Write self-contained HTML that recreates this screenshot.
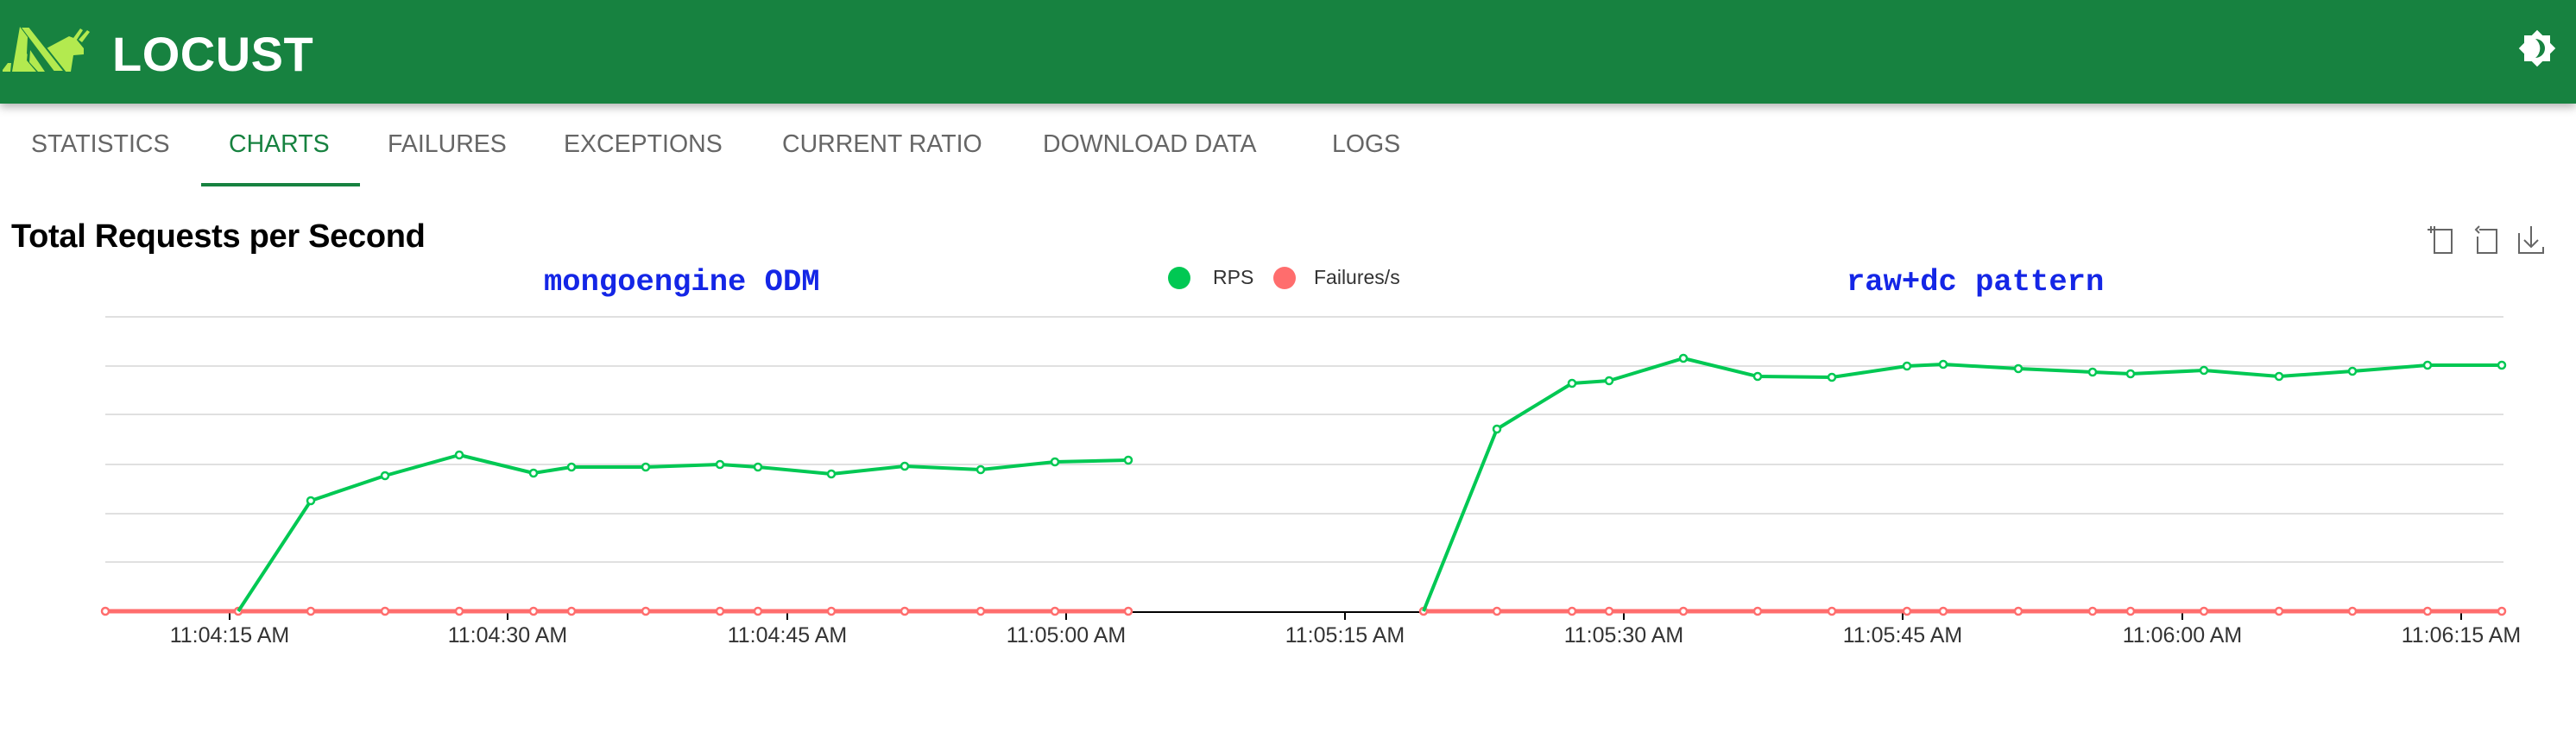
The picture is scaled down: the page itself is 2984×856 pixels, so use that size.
<!DOCTYPE html>
<html><head><meta charset="utf-8"><style>
html,body{margin:0;padding:0;width:2984px;height:856px;background:#fff;overflow:hidden;font-family:"Liberation Sans",Arial,sans-serif}
.hdr{position:absolute;left:0;top:0;width:2984px;height:120px;background:#178240;box-shadow:0 4px 10px rgba(0,0,0,.3)}
.logo{position:absolute;left:130px;top:30px;font-size:56px;font-weight:bold;color:#fff;letter-spacing:0.5px}
.tab{position:absolute;top:151px;font-size:28.5px;color:#666;white-space:nowrap}
.ul{position:absolute;left:233px;top:212px;width:184px;height:4px;background:#178240}
.title{position:absolute;left:13px;top:253px;font-size:38px;font-weight:bold;color:#000;letter-spacing:-0.3px}
.ann{position:absolute;top:306px;font-family:"Liberation Mono",monospace;font-weight:bold;font-size:35.5px;color:#1426e6}
.leg{position:absolute;top:308px;font-size:23px;color:#333}
</style></head><body>
<div class="hdr">
<svg style="position:absolute;left:0;top:0" width="110" height="100" viewBox="0 0 110 100" fill="#b3ea4f">
<polygon points="50,58 80,42 88,45 97,56 97,63 85,64 82,83 72,83 58,68"/>
<polygon points="85,44 93,33 96,35 89,46"/>
<polygon points="91,46 101,35 104,37 95,49"/>
<polygon points="23,31 34,31 75,83 62,83" stroke="#178240" stroke-width="2"/>
<polygon points="23,31 32,43 31,62 48,83 14,83"/>
<polygon points="3,81 9,73 13,73 12,83 3,83"/>
<polygon points="33,50 31,70 42,83 58,83" fill="#178240"/>
<polygon points="35,58 34,72 44,83 52,83" fill="#b3ea4f"/>
</svg>
<div class="logo">LOCUST</div>
<svg style="position:absolute;left:2916px;top:33px" width="46" height="46" viewBox="0 0 46 46">
<rect x="8" y="8" width="30" height="30" fill="#fff"/>
<rect x="8" y="8" width="30" height="30" fill="#fff" transform="rotate(45 23 23)"/>
<path d="M21 12 A11 11 0 1 1 21 34 A14 14 0 0 0 21 12Z" fill="#178240"/>
</svg>
</div>
<div class="tab" style="left:36px">STATISTICS</div>
<div class="tab" style="left:265px;color:#178240">CHARTS</div>
<div class="tab" style="left:449px">FAILURES</div>
<div class="tab" style="left:653px">EXCEPTIONS</div>
<div class="tab" style="left:906px">CURRENT RATIO</div>
<div class="tab" style="left:1208px">DOWNLOAD DATA</div>
<div class="tab" style="left:1543px">LOGS</div>
<div class="ul"></div>
<div class="title">Total Requests per Second</div>
<div class="ann" style="left:630px">mongoengine ODM</div>
<div class="ann" style="left:2139px">raw+dc pattern</div>
<svg style="position:absolute;left:1352px;top:308px" width="28" height="28"><circle cx="14" cy="14" r="13" fill="#00c853"/></svg>
<div class="leg" style="left:1405px">RPS</div>
<svg style="position:absolute;left:1474px;top:308px" width="28" height="28"><circle cx="14" cy="14" r="13" fill="#ff6d6d"/></svg>
<div class="leg" style="left:1522px">Failures/s</div>
<svg style="position:absolute;left:2810px;top:260px" width="140" height="36" viewBox="0 0 140 36" fill="none" stroke="#666" stroke-width="2">
<path d="M2 6H30V33H10V2"/><path d="M10 6H2M6 2V10" />
<path d="M62 6H82V33H60V14M62 2L58 6L62 10"/>
<path d="M108 10V33H136V26M108 26V33M122 2V26M114 18L122 26L130 18M136 26V33"/>
</svg>
<svg style="position:absolute;left:0;top:0" width="2984" height="856">
<g stroke="#e0e0e0" stroke-width="2">
<line x1="122" y1="367" x2="2900" y2="367"/><line x1="122" y1="424" x2="2900" y2="424"/><line x1="122" y1="480" x2="2900" y2="480"/><line x1="122" y1="538" x2="2900" y2="538"/><line x1="122" y1="595" x2="2900" y2="595"/><line x1="122" y1="651" x2="2900" y2="651"/>
</g>
<line x1="122" y1="709" x2="2900" y2="709" stroke="#000" stroke-width="2"/>
<g stroke="#000" stroke-width="2">
<line x1="266" y1="709" x2="266" y2="718"/><line x1="588" y1="709" x2="588" y2="718"/><line x1="912" y1="709" x2="912" y2="718"/><line x1="1235" y1="709" x2="1235" y2="718"/><line x1="1558" y1="709" x2="1558" y2="718"/><line x1="1881" y1="709" x2="1881" y2="718"/><line x1="2204" y1="709" x2="2204" y2="718"/><line x1="2528" y1="709" x2="2528" y2="718"/><line x1="2851" y1="709" x2="2851" y2="718"/>
</g>
<g font-size="25" fill="#333" text-anchor="middle" font-family="Liberation Sans,Arial,sans-serif">
<text x="266" y="744">11:04:15 AM</text><text x="588" y="744">11:04:30 AM</text><text x="912" y="744">11:04:45 AM</text><text x="1235" y="744">11:05:00 AM</text><text x="1558" y="744">11:05:15 AM</text><text x="1881" y="744">11:05:30 AM</text><text x="2204" y="744">11:05:45 AM</text><text x="2528" y="744">11:06:00 AM</text><text x="2851" y="744">11:06:15 AM</text>
</g>
<g fill="none" stroke="#ff6d6d" stroke-width="5">
<polyline points="122,708 1307,708"/><polyline points="1649,708 2898,708"/>
</g>
<g fill="#fff" stroke="#ff6d6d" stroke-width="2.5">
<circle cx="122" cy="708" r="4"/><circle cx="276" cy="708" r="4"/><circle cx="360" cy="708" r="4"/><circle cx="446" cy="708" r="4"/><circle cx="532" cy="708" r="4"/><circle cx="618" cy="708" r="4"/><circle cx="662" cy="708" r="4"/><circle cx="748" cy="708" r="4"/><circle cx="834" cy="708" r="4"/><circle cx="878" cy="708" r="4"/><circle cx="963" cy="708" r="4"/><circle cx="1048" cy="708" r="4"/><circle cx="1136" cy="708" r="4"/><circle cx="1222" cy="708" r="4"/><circle cx="1307" cy="708" r="4"/>
<circle cx="1649" cy="708" r="4"/><circle cx="1734" cy="708" r="4"/><circle cx="1821" cy="708" r="4"/><circle cx="1864" cy="708" r="4"/><circle cx="1950" cy="708" r="4"/><circle cx="2036" cy="708" r="4"/><circle cx="2122" cy="708" r="4"/><circle cx="2209" cy="708" r="4"/><circle cx="2251" cy="708" r="4"/><circle cx="2338" cy="708" r="4"/><circle cx="2424" cy="708" r="4"/><circle cx="2468" cy="708" r="4"/><circle cx="2553" cy="708" r="4"/><circle cx="2640" cy="708" r="4"/><circle cx="2725" cy="708" r="4"/><circle cx="2812" cy="708" r="4"/><circle cx="2898" cy="708" r="4"/>
</g>
<g fill="none" stroke="#00c853" stroke-width="4" stroke-linejoin="round">
<polyline points="276,708 360,580 446,551 532,527 618,548 662,541 748,541 834,538 878,541 963,549 1048,540 1136,544 1222,535 1307,533"/>
<polyline points="1649,708 1734,497 1821,444 1864,441 1950,415 2036,436 2122,437 2209,424 2251,422 2338,427 2424,431 2468,433 2553,429 2640,436 2725,430 2812,423 2898,423"/>
</g>
<g fill="#fff" stroke="#00c853" stroke-width="2.5">
<circle cx="360" cy="580" r="4"/><circle cx="446" cy="551" r="4"/><circle cx="532" cy="527" r="4"/><circle cx="618" cy="548" r="4"/><circle cx="662" cy="541" r="4"/><circle cx="748" cy="541" r="4"/><circle cx="834" cy="538" r="4"/><circle cx="878" cy="541" r="4"/><circle cx="963" cy="549" r="4"/><circle cx="1048" cy="540" r="4"/><circle cx="1136" cy="544" r="4"/><circle cx="1222" cy="535" r="4"/><circle cx="1307" cy="533" r="4"/>
<circle cx="1734" cy="497" r="4"/><circle cx="1821" cy="444" r="4"/><circle cx="1864" cy="441" r="4"/><circle cx="1950" cy="415" r="4"/><circle cx="2036" cy="436" r="4"/><circle cx="2122" cy="437" r="4"/><circle cx="2209" cy="424" r="4"/><circle cx="2251" cy="422" r="4"/><circle cx="2338" cy="427" r="4"/><circle cx="2424" cy="431" r="4"/><circle cx="2468" cy="433" r="4"/><circle cx="2553" cy="429" r="4"/><circle cx="2640" cy="436" r="4"/><circle cx="2725" cy="430" r="4"/><circle cx="2812" cy="423" r="4"/><circle cx="2898" cy="423" r="4"/>
</g>
</svg>
</body></html>
